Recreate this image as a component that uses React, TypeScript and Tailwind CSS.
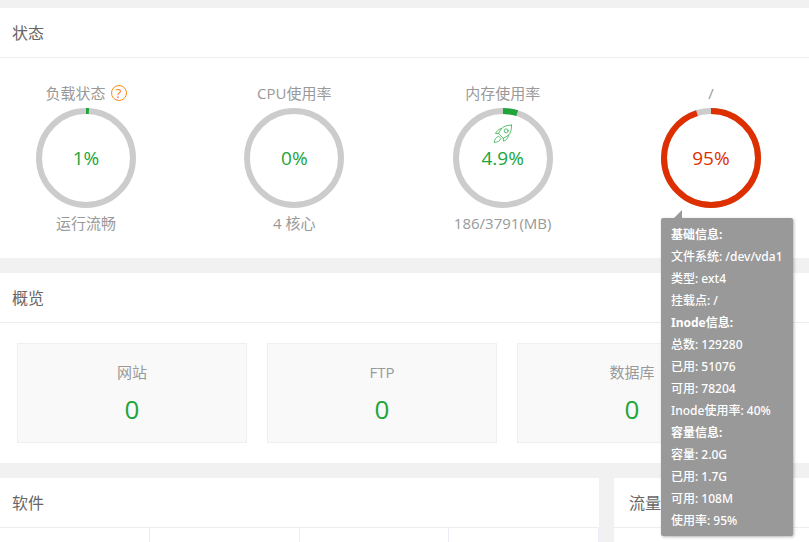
import type { ReactNode } from 'react';

interface GaugeProps {
  label: string;
  percent: number;
  note?: string;
  danger?: boolean;
  help?: boolean;
  icon?: ReactNode;
  children?: ReactNode;
}

const RADIUS = 47;
const LENGTH = 2 * Math.PI * RADIUS;

const diskInfo = [
  { text: '基础信息:', bold: true },
  { text: '文件系统: /dev/vda1' },
  { text: '类型: ext4' },
  { text: '挂载点: /' },
  { text: 'Inode信息:', bold: true },
  { text: '总数: 129280' },
  { text: '已用: 51076' },
  { text: '可用: 78204' },
  { text: 'Inode使用率: 40%' },
  { text: '容量信息:', bold: true },
  { text: '容量: 2.0G' },
  { text: '已用: 1.7G' },
  { text: '可用: 108M' },
  { text: '使用率: 95%' },
];

const overview = [
  { name: '网站', count: 0 },
  { name: 'FTP', count: 0 },
  { name: '数据库', count: 0 },
];

function RocketIcon() {
  return (
    <svg width="20" height="20" viewBox="0 0 20 20" fill="none" stroke="#20a53a" strokeOpacity="0.7" strokeWidth="1" strokeLinejoin="round" strokeLinecap="round">
      <path d="M18.500 1.200C14.500 1 11 2 8.500 4.500L5.500 9.500L10.300 14.300L15.500 11.300C17.800 9 18.700 5.500 18.500 1.200Z" />
      <path d="M8.500 4.500C6 5 3.500 6.800 2.500 9.500L5.500 9.500" />
      <path d="M15.500 11.300C15.200 14 13.500 16 10.600 17.200L10.300 14.300" />
      <circle cx="13.200" cy="6.800" r="2" />
      <path d="M5.300 12.300C3 13 1.700 15.200 1.200 18.500C4.800 18.200 7 17 7.800 14.800Z" />
    </svg>
  );
}

function SectionTitle({ children }: { children: ReactNode }) {
  return <h3 className="border-b border-[#ededed] px-3 pt-[13px] pb-3 text-base leading-6 text-[#666]">{children}</h3>;
}

function Gauge({ label, percent, note, danger, help, icon, children }: GaugeProps) {
  return (
    <div className="relative flex w-[100px] flex-col items-center text-[15px] leading-5 whitespace-nowrap text-[#999]">
      <h4 className="flex items-center gap-[5px] pb-[5px]">
        {label}
        {help && (
          <a
            href="#load"
            aria-label="负载说明"
            className="flex size-4 items-center justify-center rounded-full border border-[#ff8c1a] text-[13px] leading-3 text-[#ff7f00]"
          >
            ?
          </a>
        )}
      </h4>
      <div className="grid size-[100px] place-items-center">
        <svg viewBox="0 0 100 100" className="col-start-1 row-start-1 size-full -rotate-90" fill="none" strokeWidth="6">
          <circle cx="50" cy="50" r={RADIUS} stroke="#ccc" />
          {percent > 0 && (
            <circle
              cx="50"
              cy="50"
              r={RADIUS}
              stroke={danger ? '#dd2f00' : '#20a53a'}
              strokeDasharray={`${(LENGTH * percent) / 100} ${LENGTH}`}
            />
          )}
        </svg>
        {icon && <span className="col-start-1 row-start-1 mt-4 self-start">{icon}</span>}
        <span className={`col-start-1 row-start-1 text-[19px] leading-6 ${danger ? 'text-[#dd2f00]' : 'text-[#20a53a]'}`}>{percent}%</span>
      </div>
      {note && <p className="pt-[5px]">{note}</p>}
      {children}
    </div>
  );
}

function DiskTip() {
  return (
    <div
      role="tooltip"
      className="absolute top-[135px] left-0 z-10 rounded-xs bg-[#999] px-2.5 pt-1.5 pb-1 font-['Noto_Sans','Noto_Sans_CJK_SC',sans-serif] text-xs leading-[22px] font-medium text-white shadow-[1px_1px_3px_rgba(0,0,0,0.3)]"
    >
      <svg width="8" height="8" viewBox="0 0 8 8" className="absolute -top-2 left-[13px]">
        <path d="M8 0V8H0Z" fill="#999" />
      </svg>
      {diskInfo.map((line, i) => (
        <p key={i} className={line.bold ? 'font-bold' : ''}>{line.text}</p>
      ))}
    </div>
  );
}

export default function App() {
  return (
    <main className="flex min-h-screen flex-col gap-[15px] bg-[#f1f1f1] pt-2 font-['Open_Sans','Noto_Sans_CJK_SC',sans-serif]">
      <section className="bg-white">
        <SectionTitle>状态</SectionTitle>
        <div className="flex justify-between pt-[25px] pr-12 pb-[25px] pl-9">
          <Gauge label="负载状态" percent={1} note="运行流畅" help />
          <Gauge label="CPU使用率" percent={0} note="4 核心" />
          <Gauge label="内存使用率" percent={4.9} note="186/3791(MB)" icon={<RocketIcon />} />
          <Gauge label="/" percent={95} danger>
            <DiskTip />
          </Gauge>
        </div>
      </section>

      <section className="bg-white">
        <SectionTitle>概览</SectionTitle>
        <ul className="grid grid-cols-3 gap-5 pt-5 pr-[62px] pb-5 pl-[17px] text-center">
          {overview.map((item) => (
            <li key={item.name} className="border border-[#efefef] bg-[#f9f9f9] pt-[18px] pb-[15px]">
              <p className="text-[15px] leading-5 text-[#999]">{item.name}</p>
              <a href="#list" className="mt-[9px] block text-[26px] leading-9 text-[#20a53a]">{item.count}</a>
            </li>
          ))}
        </ul>
      </section>

      <div className="flex flex-1 gap-[15px]">
        <section className="flex flex-[599] flex-col bg-white">
          <SectionTitle>软件</SectionTitle>
          <div className="grid min-h-3.5 flex-1 grid-cols-4">
            <div className="border-r border-[#ececf8]" />
            <div className="border-r border-[#ececf8]" />
            <div className="border-r border-[#ececf8]" />
            <div className="border-r border-[#ececf8]" />
          </div>
        </section>
        <section className="flex-[195] bg-white">
          <SectionTitle>
            <span className="pl-[3px]">流量</span>
          </SectionTitle>
        </section>
      </div>
    </main>
  );
}
